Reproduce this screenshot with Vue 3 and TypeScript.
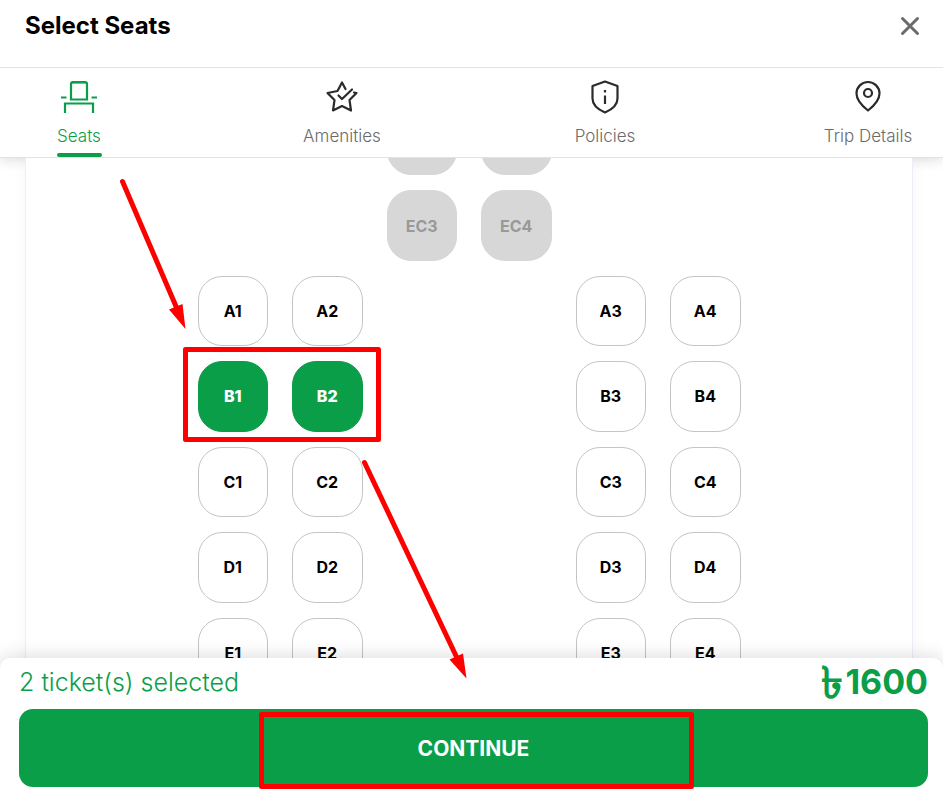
<script setup lang="ts">
import { computed, ref } from 'vue'

type SeatState = 'free' | 'booked'
interface Seat {
  id: string
  column: number
  row: number
  state: SeatState
}
interface Tab {
  id: string
  label: string
}

const tabs: Tab[] = [
  { id: 'seats', label: 'Seats' },
  { id: 'amenities', label: 'Amenities' },
  { id: 'policies', label: 'Policies' },
  { id: 'trip', label: 'Trip Details' },
]
const activeTab = ref('seats')

const crewSeats: Seat[] = ['EC1', 'EC2', 'EC3', 'EC4'].map((id, i) => ({
  id,
  column: 3 + (i % 2),
  row: 1 + Math.floor(i / 2),
  state: 'booked',
}))
const cabinSeats: Seat[] = ['A', 'B', 'C', 'D', 'E'].flatMap((letter, r) =>
  [1, 2, 5, 6].map((column, i) => ({
    id: `${letter}${i + 1}`,
    column,
    row: r + 3,
    state: 'free' as SeatState,
  })),
)
const seats: Seat[] = [...crewSeats, ...cabinSeats]

const selected = ref<string[]>(['B1', 'B2'])
const fare = 800
const total = computed(() => selected.value.length * fare)

function toggle(seat: Seat) {
  selected.value = selected.value.includes(seat.id)
    ? selected.value.filter((id) => id !== seat.id)
    : [...selected.value, seat.id]
}
</script>

<template>
  <div class="page">
    <header class="header">
      <h1 class="title">Select Seats</h1>
      <button class="close" type="button" aria-label="Close">
        <svg width="20" height="20" viewBox="0 0 20 20" aria-hidden="true">
          <path d="M2.5 2.5 17.5 17.5M17.5 2.5 2.5 17.5" fill="none" stroke="#6b6b6b" stroke-width="3" stroke-linecap="round" />
        </svg>
      </button>
    </header>

    <nav class="tabs" role="tablist">
      <button
        v-for="tab in tabs"
        :key="tab.id"
        class="tab"
        :class="{ active: activeTab === tab.id }"
        type="button"
        role="tab"
        :aria-selected="activeTab === tab.id"
        @click="activeTab = tab.id"
      >
        <svg class="icon" width="38" height="36" viewBox="0 0 38 36" fill="none" stroke="currentColor" stroke-width="2.2" aria-hidden="true">
          <template v-if="tab.id === 'seats'">
            <path d="M11 20.500V5q0-2 2-2h12q2 0 2 2v15.500z" />
            <path d="M12 3.500h14" />
            <path d="M5 34V24.500h28V34M1 18.500h5.500M31.500 18.500H37" />
          </template>
          <g v-else-if="tab.id === 'amenities'" stroke-linecap="round" stroke-linejoin="round">
            <path d="M22.500 10 19 3.500l-4.500 8.500L4.500 14l7 7-1.500 10.500 9-4.500 9 4.500L26.500 21l7-7-2.500-.5" />
            <path d="m15.500 16.500 3.500 3.500L29 10.500" />
          </g>
          <g v-else-if="tab.id === 'policies'" stroke-linejoin="round">
            <path d="M19 2.500 31.500 7v12.500c0 6-5.500 11-12.500 14-7-3-12.500-8-12.500-14V7z" />
            <path d="M19 16.500V25" />
            <path d="M19 11v2.500" />
          </g>
          <g v-else stroke-linejoin="round">
            <path d="M19 31.500C14.500 28 7.500 22 7.500 14.500a11.500 11.500 0 0 1 23 0C30.500 22 23.500 28 19 31.500z" />
            <circle cx="19" cy="14" r="4" />
          </g>
        </svg>
        <span class="tab-label">{{ tab.label }}</span>
      </button>
    </nav>

    <main class="scroller">
      <section class="panel" aria-label="Seat map">
        <div class="map">
          <button
            v-for="seat in seats"
            :key="seat.id"
            class="seat"
            :class="[seat.state, { chosen: selected.includes(seat.id) }]"
            :style="{ gridColumn: seat.column, gridRow: seat.row }"
            type="button"
            :disabled="seat.state === 'booked'"
            :aria-pressed="selected.includes(seat.id)"
            @click="toggle(seat)"
          >
            {{ seat.id }}
          </button>
        </div>
      </section>
    </main>

    <footer class="footer">
      <div class="summary">
        <span class="count">{{ selected.length }} ticket(s) selected</span>
        <span class="price"><span class="currency">৳</span>{{ total }}</span>
      </div>
      <button class="continue" type="button">CONTINUE</button>
    </footer>

    <div class="overlay" aria-hidden="true">
      <svg width="943" height="793" viewBox="0 0 943 793" fill="none" stroke="#f00" stroke-width="5" stroke-linejoin="round" stroke-linecap="round">
        <rect x="185.500" y="349.500" width="193" height="90" />
        <rect x="261.500" y="714.500" width="430" height="72" />
        <path d="M122.500 181.500 178 311M364.500 462.500 458 660" />
        <path d="M169 309.500 182.500 304l3 25zM449.500 659.500 463 653.500l3.500 25z" fill="#f00" stroke="none" />
      </svg>
    </div>
  </div>
</template>

<style>
body {
  margin: 0;
}
</style>

<style scoped>
.page {
  position: relative;
  display: flex;
  flex-direction: column;
  height: 100vh;
  overflow: hidden;
  background: #fff;
  color: #000;
  font-family: Inter, "Noto Sans", sans-serif;
}
button {
  margin: 0;
  padding: 0;
  border: 0;
  background: none;
  color: inherit;
  font-family: inherit;
  cursor: pointer;
}
.header {
  position: relative;
  z-index: 1;
  display: flex;
  justify-content: space-between;
  align-items: flex-start;
  box-sizing: border-box;
  height: 68px;
  padding: 10px 23px 0 25px;
  border-bottom: 1px solid #e3e3e3;
  background: #fff;
}
.title {
  margin: 0;
  font-size: 24px;
  line-height: 32px;
  font-weight: 650;
}
.close {
  display: flex;
  align-items: center;
  height: 32px;
}
.tabs {
  position: relative;
  display: flex;
  justify-content: space-between;
  box-sizing: border-box;
  height: 90px;
  padding: 0 32px 0 36px;
  border-bottom: 1px solid #e3e3e3;
  background: #fff;
  box-shadow: 0 2px 12px rgba(0, 0, 0, 0.14);
}
.tab {
  position: relative;
  display: flex;
  flex-direction: column;
  align-items: center;
  width: 86px;
  padding-top: 11px;
  color: #2b2b2b;
}
.tab-label {
  margin-top: 10px;
  color: #6b6b6b;
  font-size: 17px;
  line-height: 22px;
  font-weight: 300;
  white-space: nowrap;
}
.tab.active,
.tab.active .tab-label {
  color: #0a9e48;
}
.tab.active::after {
  content: "";
  position: absolute;
  bottom: 0;
  width: 45px;
  height: 4px;
  border-radius: 2px;
  background: #0a9e48;
}
.scroller {
  position: relative;
  flex: 1;
  min-height: 0;
  overflow: hidden;
}
.panel {
  display: flex;
  justify-content: center;
  margin: 0 30px 0 25px;
  border: solid #ebedf7;
  border-width: 0 1px;
  background: #fff;
  box-shadow: 0 0 16px rgba(0, 0, 0, 0.03);
}
.map {
  display: grid;
  grid-template-columns: repeat(6, 1fr);
  grid-template-rows: repeat(7, 1fr);
  gap: 15px 24px;
  width: 543px;
  height: 583px;
  margin-top: -53px;
}
.seat {
  border: 1px solid #c4c4c4;
  border-radius: 24px;
  background: #fff;
  font-size: 16px;
  line-height: 20px;
  font-weight: 700;
}
.seat.booked {
  border-color: #d7d7d7;
  background: #d7d7d7;
  color: #999;
  cursor: default;
}
.seat.chosen {
  border-color: #0a9e48;
  background: #0a9e48;
  color: #fff;
  font-weight: 800;
}
.footer {
  position: relative;
  padding: 4px 15px 6px 19px;
  border-radius: 10px 10px 0 0;
  background: #fff;
  box-shadow: 0 0 20px rgba(0, 0, 0, 0.16);
}
.summary {
  display: flex;
  justify-content: space-between;
  align-items: center;
  height: 40px;
  margin-bottom: 7px;
  color: #0a9e48;
}
.count {
  font-size: 25px;
  font-weight: 300;
}
.price {
  display: flex;
  align-items: center;
  gap: 2px;
  font-size: 34px;
  line-height: 40px;
  font-weight: 700;
}
.currency {
  font-size: 44px;
}
.continue {
  display: block;
  width: 100%;
  height: 78px;
  border-radius: 14px;
  background: #0a9e48;
  color: #fff;
  font-size: 21px;
  font-weight: 750;
}
.overlay {
  position: absolute;
  inset: 0;
  display: flex;
  justify-content: center;
  pointer-events: none;
}
.overlay svg {
  flex: none;
}
</style>
